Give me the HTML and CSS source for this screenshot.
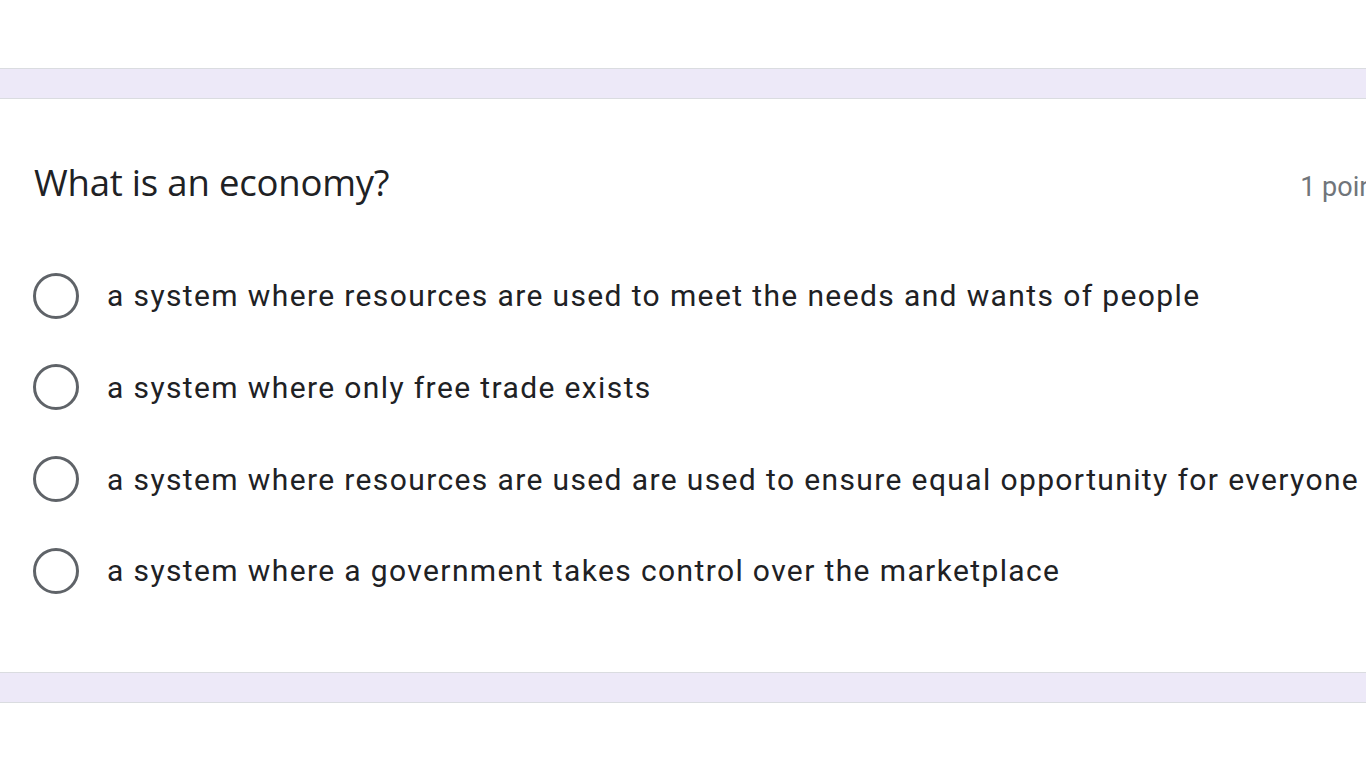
FILE: index.html
```html
<!DOCTYPE html>
<html>
<head>
<meta charset="utf-8">
<link rel="stylesheet" href="styles.css">
</head>
<body>
<div class="card card-top"></div>
<div class="card question">
  <div class="q-head">
    <div class="q-title">What is an economy?</div>
    <div class="q-points">1 point</div>
  </div>
  <div class="options">
    <div class="option"><span class="radio"></span><span class="label">a system where resources are used to meet the needs and wants of people</span></div>
    <div class="option"><span class="radio"></span><span class="label">a system where only free trade exists</span></div>
    <div class="option"><span class="radio"></span><span class="label">a system where resources are used are used to ensure equal opportunity for everyone</span></div>
    <div class="option"><span class="radio"></span><span class="label">a system where a government takes control over the marketplace</span></div>
  </div>
</div>
<div class="card card-bottom"></div>
</body>
</html>
```
FILE: styles.css
```css
html, body {
  margin: 0;
  padding: 0;
}
body {
  background: #ede9f8;
  width: 1366px;
  height: 768px;
  overflow: hidden;
  font-family: Roboto, "Liberation Sans", sans-serif;
  display: flex;
  flex-direction: column;
  gap: 29px;
}
.card {
  background: #fff;
  border-top: 1px solid #dadce0;
  border-bottom: 1px solid #dadce0;
  width: 1400px;
}
.card-top {
  height: 68px;
  border-top: none;
  flex: none;
}
.question {
  height: 575px;
  box-sizing: border-box;
  padding: 0 0 0 34px;
  flex: none;
}
.q-head {
  display: flex;
  justify-content: space-between;
  align-items: baseline;
  padding-top: 58px;
  width: 1366px;
}
.q-title {
  font-family: "Open Sans", Roboto, sans-serif;
  font-size: 36.5px;
  color: #202124;
  letter-spacing: -0.2px;
}
.q-points {
  font-size: 27px;
  color: #70757a;
  margin-right: 17px;
}
.options {
  display: flex;
  flex-direction: column;
  margin-top: 43px;
}
.option {
  display: flex;
  align-items: center;
  height: 91.67px;
}
.radio {
  width: 40px;
  height: 40px;
  margin-left: -1px;
  border: 3px solid #5f6368;
  border-radius: 50%;
  flex: none;
}
.label {
  margin-left: 28px;
  font-size: 30px;
  color: #202124;
  white-space: nowrap;
  letter-spacing: 1.38px;
}
.card-bottom {
  flex: 1;
  border-bottom: none;
}
```
